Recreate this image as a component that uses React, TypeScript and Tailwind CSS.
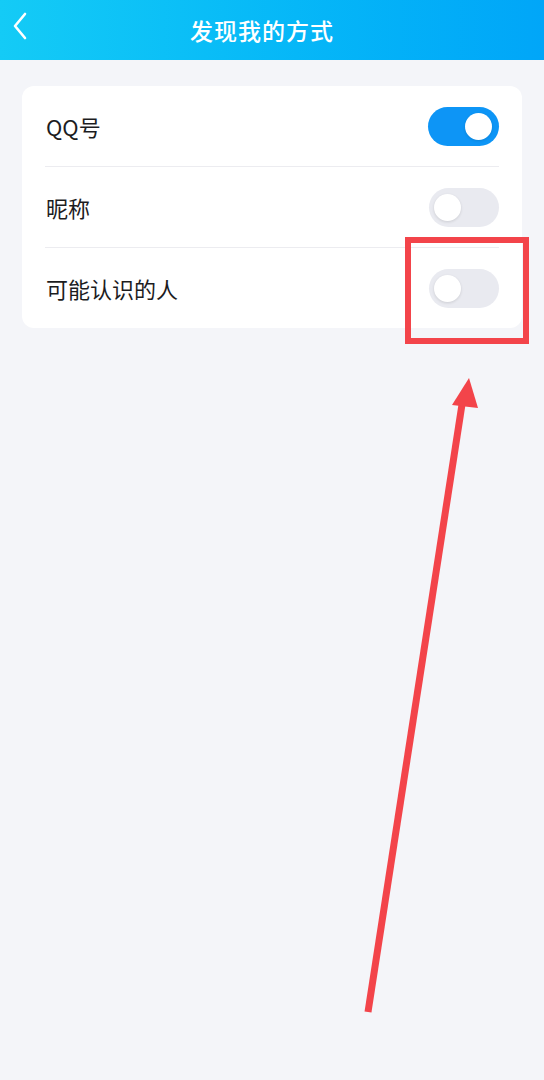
import React from "react";

type Row = {
  label: string;
  on: boolean;
};

const rows: Row[] = [
  { label: "QQ号", on: true },
  { label: "昵称", on: false },
  { label: "可能认识的人", on: false },
];

const Toggle: React.FC<{ on: boolean }> = ({ on }) => (
  <div
    className={
      on
        ? "w-[71px] h-[39px] rounded-full bg-[#0d95f6] flex items-center justify-end px-[7px]"
        : "w-[70px] h-[39px] rounded-full bg-[#e9eaf0] flex items-center justify-start px-[5px]"
    }
  >
    <div className="w-[27px] h-[27px] rounded-full bg-white shadow-[0_1px_3px_rgba(0,0,0,0.12)]" />
  </div>
);

export default function App() {
  return (
    <div
      className="relative w-[544px] h-[1080px] bg-[#f4f5f9] overflow-hidden"
      style={{ fontFamily: '"Noto Sans CJK SC", "Noto Sans", sans-serif' }}
    >
      <header className="relative h-[60px] bg-gradient-to-r from-[#14cbf6] to-[#01a6f8] flex items-center justify-center">
        <svg
          className="absolute left-[11px] top-[12px]"
          width="18"
          height="28"
          viewBox="0 0 18 28"
          fill="none"
        >
          <path d="M14 2 L4 14 L14 26" stroke="white" strokeWidth="2.6" strokeLinecap="round" strokeLinejoin="round" />
        </svg>
        <h1 className="text-white text-[23px] font-medium tracking-[1px] -ml-[20px]">发现我的方式</h1>
      </header>

      <div className="px-[22px] pt-[26px]">
        <div className="bg-white rounded-[12px] flex flex-col">
          {rows.map((row, i) => (
            <div key={row.label}>
              {i > 0 && <div className="mx-[23px] h-px bg-[#ececf0]" />}
              <div className="h-[80px] flex items-center justify-between pl-[24px] pr-[23px]">
                <span className="text-[22px] text-[#1c1c1e]">{row.label}</span>
                <Toggle on={row.on} />
              </div>
            </div>
          ))}
        </div>
      </div>

      {/* annotation: highlight box */}
      <div className="absolute left-[405px] top-[237px] w-[124px] h-[107px] border-[6px] border-[#f3444a]" />

      {/* annotation: arrow */}
      <svg className="absolute left-0 top-0 pointer-events-none" width="544" height="1080" viewBox="0 0 544 1080">
        <line x1="368" y1="1012" x2="463" y2="398" stroke="#f3444a" strokeWidth="7" />
        <polygon points="469,378 452,405 478,408" fill="#f3444a" />
      </svg>
    </div>
  );
}
